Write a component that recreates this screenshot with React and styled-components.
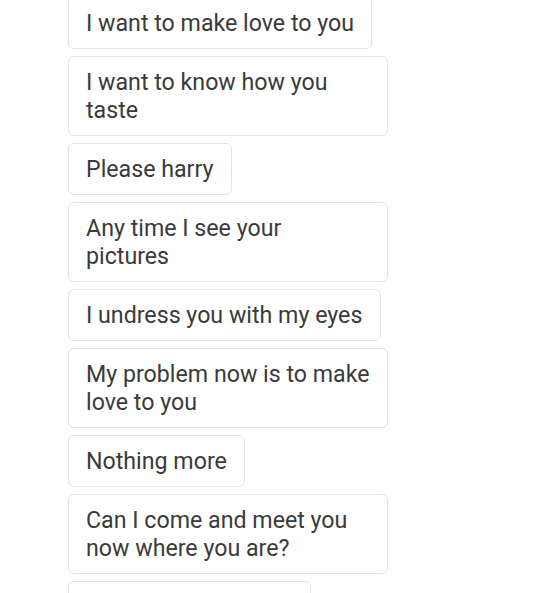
import React from "react";
import styled, { createGlobalStyle } from "styled-components";

const GlobalStyle = createGlobalStyle`
  html, body {
    margin: 0;
    padding: 0;
    background: #ffffff;
  }
  body {
    font-family: Roboto, "Noto Sans", "Liberation Sans", sans-serif;
    overflow: hidden;
  }
`;

const Screen = styled.div`
  width: 554px;
  height: 593px;
  overflow: hidden;
  background: #ffffff;
`;

const Thread = styled.div`
  display: flex;
  flex-direction: column;
  align-items: flex-start;
  gap: 7px;
  margin-top: -3px;
  padding-left: 68px;
`;

const Bubble = styled.div`
  box-sizing: border-box;
  max-width: 320px;
  padding: 11px 17.4px 11px 17px;
  border: 1px solid #e3e3e3;
  border-radius: 6px;
  background: #ffffff;
  color: #3a3a3a;
  font-size: 23.2px;
  line-height: 28px;
`;

const messages = [
  "I want to make love to you",
  "I want to know how you taste",
  "Please harry",
  "Any time I see your pictures",
  "I undress you with my eyes",
  "My problem now is to make love to you",
  "Nothing more",
  "Can I come and meet you now where you are?",
  "Where are you now?",
];

export default function App() {
  return (
    <Screen>
      <GlobalStyle />
      <Thread>
        {messages.map((text, i) => (
          <Bubble key={i}>{text}</Bubble>
        ))}
      </Thread>
    </Screen>
  );
}
